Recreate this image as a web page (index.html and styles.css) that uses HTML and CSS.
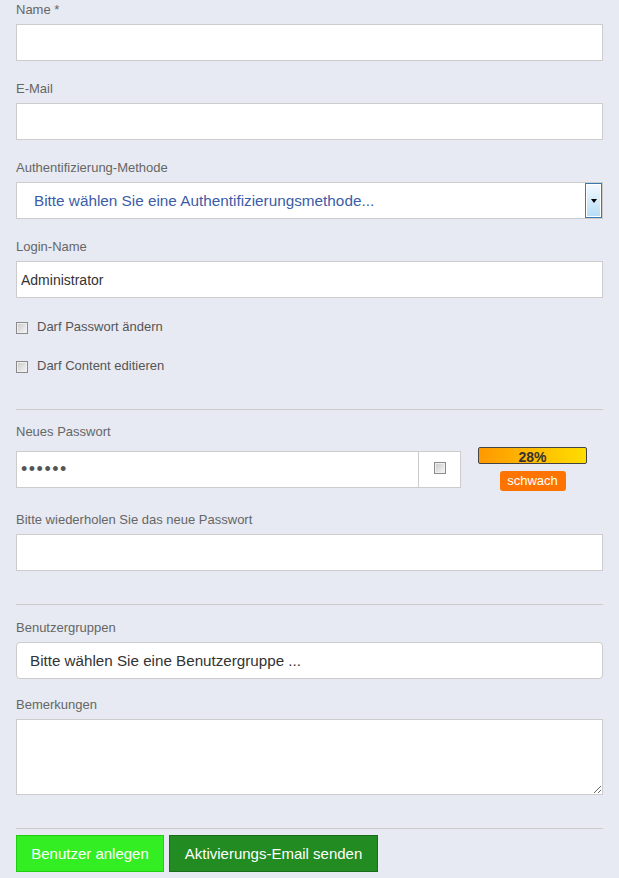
FILE: index.html
```html
<!DOCTYPE html>
<html lang="de">
<head>
<meta charset="utf-8">
<title>Benutzer anlegen</title>
<link rel="stylesheet" href="styles.css">
</head>
<body>
<form class="form">
  <div class="field">
    <label class="lbl">Name *</label>
    <input class="txt" type="text">
  </div>
  <div class="field">
    <label class="lbl">E-Mail</label>
    <input class="txt" type="text">
  </div>
  <div class="field">
    <label class="lbl">Authentifizierung-Methode</label>
    <div class="select">
      <span class="select-text">Bitte wählen Sie eine Authentifizierungsmethode...</span>
      <span class="select-btn"><span class="tri"></span></span>
    </div>
  </div>
  <div class="field">
    <label class="lbl">Login-Name</label>
    <input class="txt" type="text" value="Administrator">
  </div>
  <div class="checks">
    <label class="check"><input class="cb" type="checkbox"> Darf Passwort ändern</label>
    <label class="check"><input class="cb" type="checkbox"> Darf Content editieren</label>
  </div>
  <hr class="sep sep-first">
  <div class="field pw-field">
    <label class="lbl">Neues Passwort</label>
    <div class="pw-row">
      <div class="pw-group">
        <input class="txt pw" type="password" value="secret">
        <span class="pw-cell"><input class="cb" type="checkbox"></span>
      </div>
      <div class="meter-wrap">
        <div class="meter">28%</div>
        <span class="badge">schwach</span>
      </div>
    </div>
  </div>
  <div class="field field-before-sep">
    <label class="lbl">Bitte wiederholen Sie das neue Passwort</label>
    <input class="txt" type="password">
  </div>
  <hr class="sep">
  <div class="field field-groups">
    <label class="lbl">Benutzergruppen</label>
    <div class="group-select">Bitte wählen Sie eine Benutzergruppe ...</div>
  </div>
  <div class="field field-last">
    <label class="lbl">Bemerkungen</label>
    <textarea class="area"></textarea>
  </div>
  <hr class="sep sep-btn">
  <div class="buttons">
    <button class="btn btn-primary" type="button">Benutzer anlegen</button>
    <button class="btn btn-dark" type="button">Aktivierungs-Email senden</button>
  </div>
</form>
</body>
</html>
```
FILE: styles.css
```css
html, body {
  margin: 0;
  padding: 0;
  background: #e7eaf2;
}
body {
  font-family: "Liberation Sans", Arial, sans-serif;
  color: #666;
}
.form {
  padding: 2px 16px 0 16px;
}
.field {
  margin-bottom: 20px;
}
.lbl {
  display: block;
  font-size: 13px;
  line-height: 15px;
  margin-bottom: 7px;
  color: #666;
}
.txt {
  display: block;
  box-sizing: border-box;
  width: 100%;
  height: 37px;
  margin: 0;
  border: 1px solid #cccccc;
  background: #fff;
  padding: 0 4px;
  font-family: "Liberation Sans", Arial, sans-serif;
  font-size: 14px;
  color: #333;
  outline: none;
}
.select {
  box-sizing: border-box;
  height: 37px;
  border: 1px solid #cccccc;
  background: #fff;
  display: flex;
  align-items: center;
  justify-content: space-between;
  padding: 0 0 0 17px;
}
.select-text {
  font-size: 15.3px;
  color: #3b5ca8;
  white-space: nowrap;
}
.select-btn {
  box-sizing: border-box;
  width: 17px;
  height: 35px;
  border: 1px solid #3a7ab0;
  background: linear-gradient(#f4faff, #b6dcf6);
  display: flex;
  align-items: center;
  justify-content: center;
  box-shadow: inset 0 0 0 1px #fff;
}
.tri {
  width: 0;
  height: 0;
  border-left: 3.5px solid transparent;
  border-right: 3.5px solid transparent;
  border-top: 4px solid #000;
}
.checks {
  display: flex;
  flex-direction: column;
  gap: 23px;
}
.check {
  display: flex;
  align-items: center;
  height: 16px;
  font-size: 13px;
  color: #555;
  gap: 9px;
}
.cb {
  appearance: none;
  -webkit-appearance: none;
  box-sizing: border-box;
  width: 12px;
  height: 12px;
  margin: 0;
  border: 1px solid #8a8a8a;
  background: linear-gradient(135deg, #c9c9c9, #f7f7f7);
  box-shadow: inset 0 0 0 1px #f0f0f0;
}
.check .cb {
  margin-top: 3px;
}
.sep {
  border: 0;
  border-top: 1px solid #cccccc;
  margin: 0;
  height: 0;
}
.sep-first {
  margin-top: 36px;
}
.pw-field {
  margin-top: 14px;
  margin-bottom: 24px;
}
.pw-field .lbl {
  margin-bottom: 12px;
}
.pw-row {
  display: flex;
  align-items: flex-start;
  height: 37px;
}
.pw-group {
  display: flex;
}
.pw {
  width: 403px;
  font-size: 18px;
  letter-spacing: 1.5px;
  color: #555;
}
.pw-cell {
  box-sizing: border-box;
  width: 42px;
  height: 37px;
  border: 1px solid #cccccc;
  border-left: 0;
  background: #fff;
  display: flex;
  align-items: flex-start;
  justify-content: center;
  padding-top: 10px;
}
.meter-wrap {
  margin-left: 17px;
  margin-top: -4px;
  display: flex;
  flex-direction: column;
  align-items: center;
  gap: 7px;
}
.meter {
  box-sizing: border-box;
  width: 109px;
  height: 17px;
  border: 1px solid #444;
  border-radius: 2px;
  background: linear-gradient(to right, #ff9900, #ffdd00);
  font-size: 14px;
  font-weight: bold;
  line-height: 18px;
  text-align: center;
  color: #333;
}
.badge {
  display: block;
  width: 66px;
  height: 20px;
  line-height: 20px;
  border-radius: 3px;
  background: #ff7300;
  color: #fff;
  font-size: 13px;
  text-align: center;
}
.field-before-sep {
  margin-bottom: 33px;
}
.field-groups {
  margin-top: 15px;
  margin-bottom: 18px;
}
.group-select {
  box-sizing: border-box;
  height: 37px;
  border: 1px solid #cccccc;
  border-radius: 4px;
  background: #fff;
  padding-left: 13px;
  display: flex;
  align-items: center;
  font-size: 15.2px;
  color: #333;
}
.area {
  display: block;
  box-sizing: border-box;
  width: 100%;
  height: 76px;
  margin: 0;
  border: 1px solid #cccccc;
  background: #fff;
  font-family: "Liberation Sans", Arial, sans-serif;
  outline: none;
}
.field.field-last {
  margin-bottom: 33px;
}
.sep-btn {
  margin-bottom: 6px;
}
.buttons {
  display: flex;
  gap: 5px;
}
.btn {
  box-sizing: border-box;
  height: 37px;
  padding: 0 10px;
  margin: 0;
  font-family: "Liberation Sans", Arial, sans-serif;
  font-size: 15px;
  color: #fff;
  cursor: pointer;
}
.btn-primary {
  width: 148px;
  background: #33ee22;
  border: 1px solid #22cc11;
}
.btn-dark {
  width: 209px;
  background: #228b22;
  border: 1px solid #1a6c1a;
}
```
